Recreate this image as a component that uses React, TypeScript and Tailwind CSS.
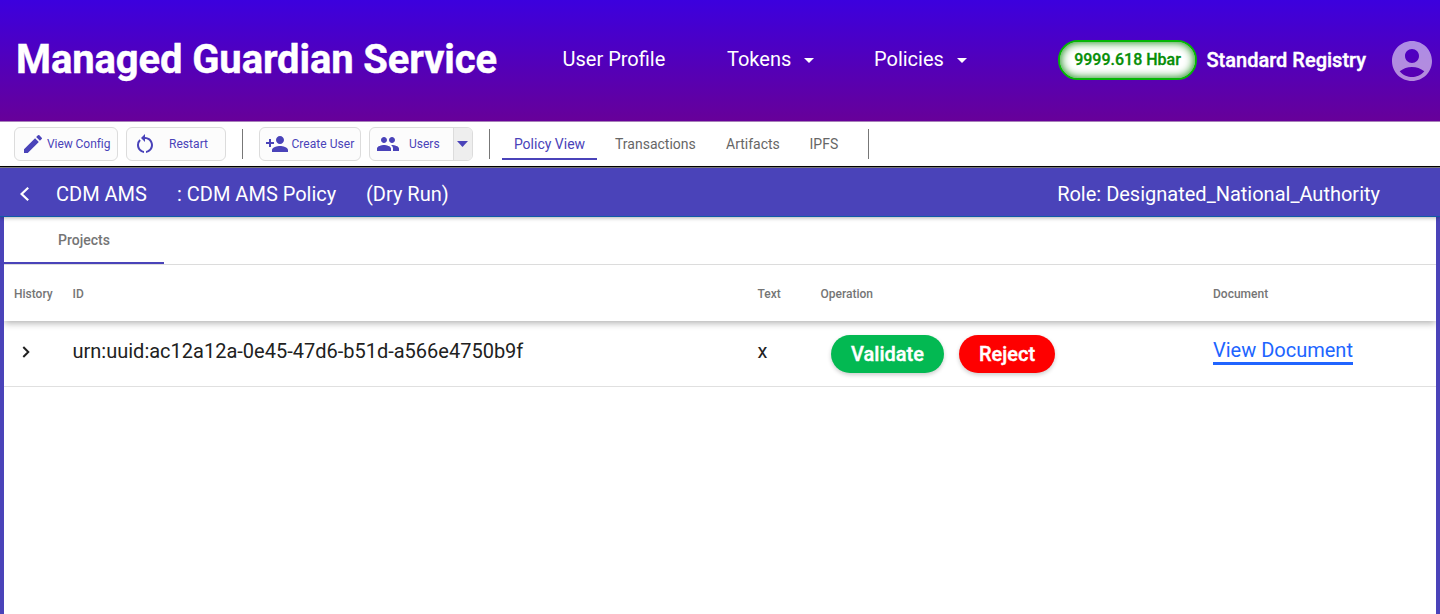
import type { ReactNode } from "react";
import {
  MdAccountCircle,
  MdEdit,
  MdPeople,
  MdPersonAdd,
  MdRestartAlt,
} from "react-icons/md";

function Caret({ className }: { className: string }) {
  return (
    <svg viewBox="0 0 10 5" preserveAspectRatio="none" className={className} fill="currentColor">
      <path d="M0 0h10L5 5z" />
    </svg>
  );
}

function Header() {
  return (
    <header className="flex h-[122px] shrink-0 items-center border-b border-[#a67fb8] bg-linear-to-b/srgb from-[#3c00de] to-[#670099] whitespace-nowrap text-white">
      <h1 className="mb-px ml-4 w-[546.5px] text-[40px] leading-none font-bold tracking-[-0.12px] [-webkit-text-stroke:0.4px_white]">Managed Guardian Service</h1>
      <nav className="mb-1 flex w-[495.5px] items-center text-[20px] leading-6">
        <a className="w-[164.5px]">User Profile</a>
        <a className="flex w-[147px] items-center">
          <span className="w-[77px]">Tokens</span>
          <Caret className="mt-1 h-[5px] w-[10px]" />
        </a>
        <a className="flex items-center">
          <span className="w-[83px]">Policies</span>
          <Caret className="mt-1 h-[5px] w-[10px]" />
        </a>
      </nav>
      <div className="mb-[2px] flex h-10 w-[139px] items-center justify-center rounded-full border-2 border-[#06b606] bg-white text-[16px] font-medium text-[#068e06] shadow-[inset_0_0_10px_#008000] [-webkit-text-stroke:0.3px_#068e06]">
        9999.618 Hbar
      </div>
      <span className="mb-[2px] ml-[9.5px] w-[181.5px] text-[20px] font-medium [-webkit-text-stroke:0.4px_white]">Standard Registry</span>
      <MdAccountCircle className="size-12 shrink-0 text-white/55" />
    </header>
  );
}

function Divider() {
  return <div className="h-[30px] w-px bg-[#777]" />;
}

function ToolButton({ icon, label, className, labelClass }: { icon: ReactNode; label: string; className: string; labelClass: string }) {
  return (
    <button className={`flex h-[34px] items-center rounded-md border border-[#dcdcdc] bg-[#fcfcfc] ${className}`}>
      {icon}
      <span className={labelClass}>{label}</span>
    </button>
  );
}

function Toolbar() {
  return (
    <div className="flex h-[46px] shrink-0 items-center border-b border-b-[#808080] bg-white pb-px whitespace-nowrap text-[#4a43b9] shadow-[inset_0_-1px_0_#000]">
      <div className="flex items-center gap-4 text-[12px]">
        <div className="ml-[14px] flex gap-2">
          <ToolButton className="w-[104px] pl-1.5" icon={<MdEdit className="size-6" />} label="View Config" labelClass="ml-[2px] tracking-[-0.06px]" />
          <ToolButton className="w-[100px] pl-[5.5px]" icon={<MdRestartAlt className="size-6" />} label="Restart" labelClass="ml-[12.5px] tracking-[0.05px]" />
        </div>
        <Divider />
        <div className="flex gap-2">
          <ToolButton className="w-[102px] pl-[5px]" icon={<MdPersonAdd className="size-6" />} label="Create User" labelClass="ml-[2.5px] tracking-[0.04px]" />
          <div className="flex h-[34px] w-[104px] overflow-hidden rounded-md border border-[#dcdcdc] bg-[#fcfcfc]">
            <button className="flex w-[83px] items-center pl-[5.5px]">
              <MdPeople className="size-6" />
              <span className="ml-[9.5px]">Users</span>
            </button>
            <button className="flex flex-1 items-center border-l border-[#dcdcdc] bg-[#eeeeee] pl-[3px]">
              <Caret className="h-[6px] w-[11px]" />
            </button>
          </div>
        </div>
        <Divider />
      </div>
      <nav className="flex text-[14px] text-[#666]">
        <a className="ml-3 flex h-8 w-[95px] items-center justify-center border-b-2 border-[#4a43b9] pt-0.5 text-[#4a43b9]">Policy View</a>
        <a className="ml-[18px] flex h-8 w-[111px] items-center">Transactions</a>
        <a className="flex h-8 w-[83.5px] items-center">Artifacts</a>
        <a className="flex h-8 w-[58.5px] items-center">IPFS</a>
      </nav>
      <Divider />
    </div>
  );
}

function PolicyBar() {
  return (
    <div className="relative z-10 flex h-[49px] shrink-0 items-center border-b border-[#105aa8] bg-[#4a43b9] pt-1 pr-[60px] whitespace-nowrap text-[20px] text-white shadow-[0_1px_4px_rgba(0,0,0,0.3)]">
      <svg viewBox="0 0 10 16" className="ml-5 h-4 w-2.5" fill="none" stroke="currentColor" strokeWidth="2.2">
        <path d="M8.2 1.8 1.6 8l6.6 6.2" />
      </svg>
      <span className="ml-[26px] w-[121px]">CDM AMS</span>
      <span className="w-[189px]">: CDM AMS Policy</span>
      <span>(Dry Run)</span>
      <span className="ml-auto">Role: Designated_National_Authority</span>
    </div>
  );
}

const columns = "grid grid-cols-[58.5px_685px_63px_392.5px_1fr] pl-[10px]";

function ProjectsTable() {
  return (
    <div className="overflow-hidden whitespace-nowrap">
      <div className={`${columns} relative z-10 h-[56px] items-center pt-[2px] text-[12px] font-medium text-[#757575] shadow-[0_2px_7px_rgba(0,0,0,0.32)]`}>
        <span>History</span>
        <span>ID</span>
        <span>Text</span>
        <span>Operation</span>
        <span>Document</span>
      </div>
      <div className={`${columns} h-[66px] items-center border-b border-[#e0e0e0] text-[20px] text-[#212121]`}>
        <svg viewBox="0 0 8 12" className="mb-1 ml-2 h-3 w-2" fill="none" stroke="currentColor" strokeWidth="2">
          <path d="M1.3 1l5 5-5 5" />
        </svg>
        <span className="mb-1.5">urn:uuid:ac12a12a-0e45-47d6-b51d-a566e4750b9f</span>
        <span className="mb-[5px]">x</span>
        <div className="flex gap-[15px] pl-[10.5px] text-[20px] font-medium text-white">
          <button className="h-[38px] w-[113px] rounded-full bg-[#03b952] shadow-[0_2px_4px_rgba(0,0,0,0.2)] [-webkit-text-stroke:0.4px_white]">Validate</button>
          <button className="h-[38px] w-[96px] rounded-full bg-[#fe0000] shadow-[0_2px_4px_rgba(0,0,0,0.2)] [-webkit-text-stroke:0.4px_white]">Reject</button>
        </div>
        <a className="mb-[5px] h-7 w-[140px] border-b-[3px] border-[#2064ff] leading-[27px] text-[#2064ff]">View Document</a>
      </div>
    </div>
  );
}

export default function App() {
  return (
    <div className="flex h-[614px] w-[1440px] flex-col overflow-hidden bg-white font-['Roboto',sans-serif]">
      <Header />
      <Toolbar />
      <PolicyBar />
      <main className="flex-1 border-x-4 border-[#4a43b9] bg-white">
        <div className="flex h-[48px] border-b border-[#dcdcdc]">
          <div className="flex w-40 items-center justify-center border-b-2 border-[#4a43b9] pt-[2px] text-[14px] font-medium text-[#757575]">Projects</div>
        </div>
        <ProjectsTable />
      </main>
    </div>
  );
}
